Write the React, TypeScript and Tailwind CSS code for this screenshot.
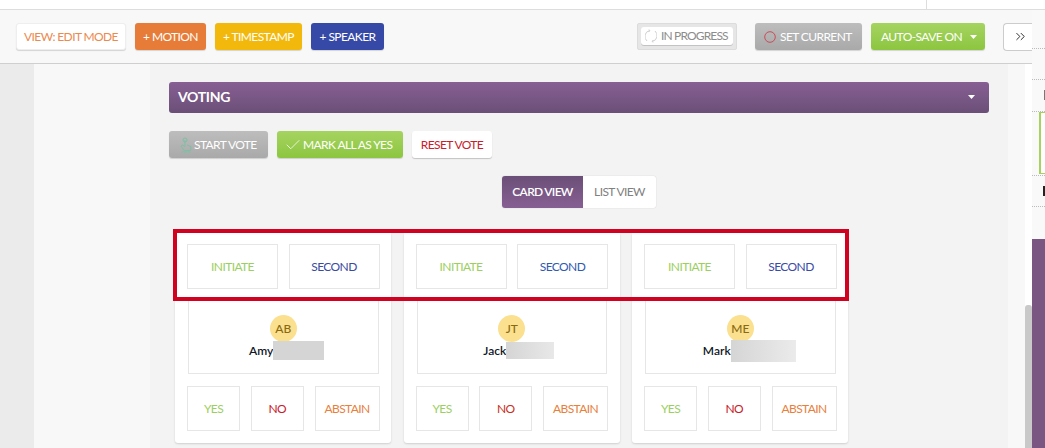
import React from "react";
import { Check, ChevronsRight } from "lucide-react";

const Caret = () => (
  <svg width="7" height="4" viewBox="0 0 7 4" className="fill-white">
    <path d="M0 0h7L3.5 4z" />
  </svg>
);

const label = "text-xs tracking-[-0.6px] whitespace-nowrap";
const toolbarBtn = `h-[27px] rounded-[3px] flex items-center justify-center shadow-[0_1px_1px_rgba(0,0,0,0.15)] ${label}`;

// gray box cell used on the cards
const Cell = ({ text, color, width }: { text: string; color: string; width: string }) => (
  <div className={`h-[45px] border border-[#e6e6e6] flex items-center justify-center ${label} ${color} ${width}`}>
    {text}
  </div>
);

type Member = {
  initials: string;
  name: string;
  nudge: string;
  blur: string;
  second: string;
  no: string;
};

const members: Member[] = [
  {
    initials: "AB",
    name: "Amy",
    nudge: "pl-[7px]",
    blur: "w-[51px] h-[19px] bg-[#d5d5d5]",
    second: "text-[#3a4a9f]",
    no: "text-[#c8202a]",
  },
  {
    initials: "JT",
    name: "Jack",
    nudge: "pl-[14px]",
    blur: "w-[48px] h-[17px] bg-gradient-to-r from-[#d5d5d5] to-[#e8e8e8]",
    second: "text-[#2f5ab0]",
    no: "text-[#c8301e]",
  },
  {
    initials: "ME",
    name: "Mark",
    nudge: "pl-[18px]",
    blur: "w-[65px] h-[22px] bg-gradient-to-r from-[#d5d5d5] to-[#ebebeb]",
    second: "text-[#3a4aa8]",
    no: "text-[#c8202a]",
  },
];

const MemberCard = ({ m }: { m: Member }) => (
  <div className="w-[216px] h-[210px] bg-white rounded-b-[3px] shadow-[0_1px_2px_rgba(0,0,0,0.15)] pl-[12px] pr-[11.5px] pt-[11px]">
    <div className="flex justify-between">
      <Cell text="INITIATE" color="text-[#9ccf5f]" width="w-[91px]" />
      <Cell text="SECOND" color={m.second} width="w-[91px]" />
    </div>
    <div className="mt-[8px] mx-[1px] h-[77px] border border-[#e6e6e6] flex flex-col items-center pt-[17px]">
      <div className="w-[27px] h-[27px] rounded-full bg-[#fbe08f] flex items-center justify-center text-xs font-medium text-[#8a6a10]">
        {m.initials}
      </div>
      <div className={`h-[17px] flex items-center text-xs font-semibold text-[#101828] ${m.nudge}`}>
        <span>{m.name}</span>
        <span className={`shrink-0 ${m.blur}`} />
      </div>
    </div>
    <div className="mt-[12px] flex justify-between">
      <Cell text="YES" color="text-[#9ccf5f]" width="w-[53px]" />
      <Cell text="NO" color={m.no} width="w-[53px]" />
      <Cell text="ABSTAIN" color="text-[#e8803c]" width="w-[65px]" />
    </div>
  </div>
);

export default function App() {
  return (
    <div className="w-[1045px] h-[448px] overflow-hidden flex flex-col bg-white font-['Lato',sans-serif]">
      {/* top strip */}
      <div className="h-[10px] shrink-0 bg-white border-b border-[#dddddd] flex justify-end">
        <div className="w-[119px] border-l border-[#dddddd]" />
      </div>

      <div className="flex-1 flex min-h-0">
        <div className="w-[1032px] flex flex-col">
          {/* toolbar */}
          <div className="h-[54px] shrink-0 bg-[#f8f8f8] border-b border-[#cfcfcf] flex items-center pl-[16px]">
            <button className={`${toolbarBtn} w-[110px] bg-white text-[#ec8a4e] border border-[#eeeeee]`}>VIEW: EDIT MODE</button>
            <button className={`${toolbarBtn} w-[71px] ml-[9px] bg-[#e67c38] text-white`}>+ MOTION</button>
            <button className={`${toolbarBtn} w-[87px] ml-[9px] bg-[#f2b90c] text-white`}>+ TIMESTAMP</button>
            <button className={`${toolbarBtn} w-[73px] ml-[9px] bg-[#3649a6] text-white`}>+ SPEAKER</button>

            <div className="w-[100px] h-[27px] ml-[253px] rounded-[2px] bg-[#e6e6e6] border border-[#dcdcdc] pl-[3px] pt-[3px]">
              <div className="w-[92px] h-[18px] rounded-[3px] bg-white flex items-center pl-[4px] text-[#8c8c8c] shadow-[0_1px_0_rgba(0,0,0,0.15)] text-xs tracking-[-0.85px] whitespace-nowrap">
                <svg width="12" height="14" viewBox="0 0 12 14" fill="none" stroke="#cfcfcf" strokeWidth="1" className="mr-[4px] shrink-0">
                  <path d="M2 12A6 6 0 0 1 4.5 1.6M10 2a6 6 0 0 1-2.5 10.4" />
                  <path d="M4 0.5l1 1.4-1.6 0.7M8 13.5l-1-1.4 1.6-0.7" />
                </svg>
                IN PROGRESS
              </div>
            </div>

            <button className={`${toolbarBtn} w-[107px] ml-[18px] bg-gradient-to-b from-[#bdbdbd] to-[#a9a9a9] text-white !justify-start pl-[9px]`}>
              <svg width="12" height="12" viewBox="0 0 12 12" fill="none" className="mr-[4px] shrink-0">
                <circle cx="6" cy="6" r="5.3" stroke="#c9414f" strokeWidth="0.9" />
              </svg>
              SET CURRENT
            </button>
            <button className={`${toolbarBtn} w-[114px] ml-[9px] bg-gradient-to-b from-[#a6d360] to-[#8cc63f] text-white !justify-start pl-[10px]`}>
              AUTO-SAVE ON
              <span className="ml-[8px]"><Caret /></span>
            </button>
            <button className="w-[29px] h-[28px] ml-[18px] bg-white rounded-l-[4px] border border-r-0 border-[#cccccc] flex items-center justify-center pl-[4px] text-[#222222]">
              <ChevronsRight size={15} strokeWidth={1.5} />
            </button>
          </div>

          {/* page body */}
          <div className="flex-1 flex min-h-0">
            <div className="w-[34px] bg-[#ebebeb]" />
            <div className="w-[116px] bg-[#f8f8f8]" />
            <div className="w-[858px] bg-[#f3f3f3] px-[19px] pt-[18px]">
              <div className="h-[31px] rounded-[3px] bg-gradient-to-b from-[#875f93] to-[#6b4f78] flex items-center justify-between pl-[9px] pr-[14px] pb-[1px] text-white text-sm font-bold tracking-[-0.3px]">
                VOTING
                <Caret />
              </div>

              <div className="mt-[18px] flex gap-[9px]">
                <button className={`w-[99px] h-[27px] rounded-[3px] bg-gradient-to-b from-[#bdbdbd] to-[#a9a9a9] text-white flex items-center pl-[10px] shadow-[0_1px_1px_rgba(0,0,0,0.15)] ${label}`}>
                  <svg width="14" height="16" viewBox="0 0 14 16" fill="none" stroke="#7fbfa5" strokeWidth="1" className="mr-[1px] shrink-0">
                    <circle cx="6" cy="3" r="2" />
                    <path d="M6 3v6.5L3.5 8 2 9l3 4.5h6.5l.5-4-4-1.5M2.5 15h9" />
                  </svg>
                  START VOTE
                </button>
                <button className={`w-[126px] h-[27px] rounded-[3px] bg-gradient-to-b from-[#a6d360] to-[#8cc63f] text-white flex items-center pl-[7px] shadow-[0_1px_1px_rgba(0,0,0,0.15)] ${label}`}>
                  <Check size={18} strokeWidth={1} className="mr-[1px] shrink-0" />
                  MARK ALL AS YES
                </button>
                <button className={`w-[80px] h-[27px] rounded-[3px] bg-white text-[#c8202a] flex items-center justify-center shadow-[0_1px_1px_rgba(0,0,0,0.2)] ${label}`}>
                  RESET VOTE
                </button>
              </div>

              <div className="mt-[18px] flex justify-center">
                <div className="flex h-[32px] rounded-[3px] overflow-hidden shadow-[0_0_1px_rgba(0,0,0,0.3)]">
                  <div className="w-[81px] bg-gradient-to-b from-[#6b4f78] to-[#875f93] text-white font-semibold flex items-center justify-center text-xs tracking-[-0.7px] whitespace-nowrap">CARD VIEW</div>
                  <div className={`w-[73px] bg-white text-[#808080] flex items-center justify-center ${label}`}>LIST VIEW</div>
                </div>
              </div>

              <div className="relative mt-[25px] ml-[6px] w-[673px] flex gap-[12.5px]">
                {members.map((m) => (
                  <MemberCard key={m.initials} m={m} />
                ))}
                {/* red highlight around the initiate/second row */}
                <div className="absolute left-[-2px] top-[-4px] w-[676px] h-[72px] border-4 border-[#d0021f]" />
              </div>
            </div>
            <div className="w-[17px] bg-[#f8f8f8]" />
            <div className="w-[7px] bg-white flex flex-col">
              <div className="mt-[241px] flex-1 bg-[#c9c9c9] rounded-t-[3px]" />
            </div>
          </div>
        </div>

        {/* clipped side panel */}
        <div className="w-[13px] bg-[#f9f9f9] flex flex-col">
          <div className="h-[39px] border-b border-dotted border-[#bbbbbb]" />
          <div className="h-[31px] border-b border-dotted border-[#bbbbbb]" />
          <div className="h-[32px] border-b border-dotted border-[#bbbbbb] flex items-end">
            <div className="ml-[12px] w-[1px] h-[10px] mb-[11px] bg-[#777777]" />
          </div>
          <div className="h-[64px] border-b border-dotted border-[#bbbbbb] pl-[7px]">
            <div className="h-[62px] bg-white border-l-2 border-y border-[#a6d360]" />
          </div>
          <div className="h-[31px] border-b border-dotted border-[#bbbbbb] flex items-center">
            <div className="ml-[11px] w-[2px] h-[10px] bg-[#222222]" />
          </div>
          <div className="h-[32px]" />
          <div className="flex-1 bg-[#7a5782]" />
        </div>
      </div>
    </div>
  );
}
